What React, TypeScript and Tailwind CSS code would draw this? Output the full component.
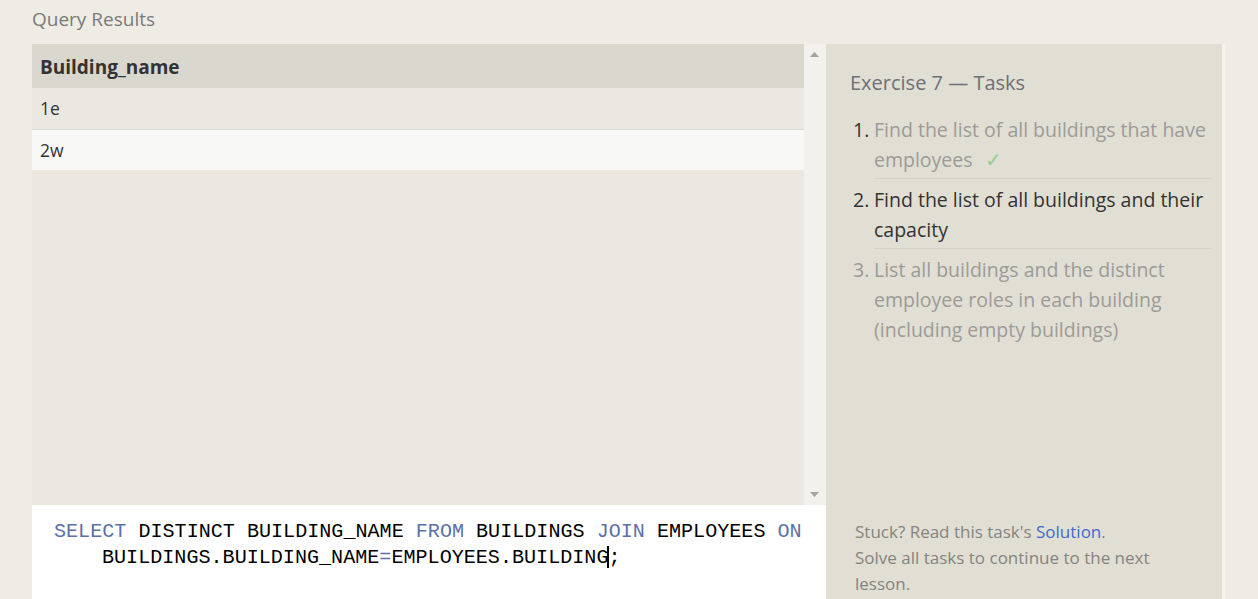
import React from 'react';

const sans = { fontFamily: '"Open Sans", "Noto Sans", sans-serif' };

function Kw({ children }: { children: React.ReactNode }) {
  return <span className="text-[#5b72a6]">{children}</span>;
}

export default function App() {
  return (
    <div className="w-[1258px] h-[599px] overflow-hidden bg-[#efece5] flex flex-col" style={sans}>
      <div className="h-[44px] pl-[32px] pt-[5px] text-[19px] text-[#7a7a7a] leading-[28px]">Query Results</div>

      <div className="flex flex-1 min-h-0">
        {/* left: results + editor */}
        <div className="w-[794px] ml-[32px] flex flex-col">
          <div className="h-[461px] flex">
            <div className="flex-1 bg-[#eae8e1] text-[#333]">
              <div className="h-[44px] bg-[#dad8ce] flex items-center pl-[8px] pt-[3px] text-[19px] font-bold">Building_name</div>
              <div className="h-[42px] flex items-center pl-[8px] text-[17.5px] border-b border-[#dcdcd8]">1e</div>
              <div className="h-[40px] flex items-center pl-[8px] text-[17.5px] bg-[#f8f8f7]">2w</div>
            </div>
            <div className="w-[22px] bg-[#f2f1ee] flex flex-col items-center justify-between py-[8px] pr-[2px]">
              <svg width="9" height="5" viewBox="0 0 9 5"><path d="M0 5 L4.5 0 L9 5 Z" fill="#a3a3a3" /></svg>
              <svg width="9" height="5" viewBox="0 0 9 5"><path d="M0 0 L4.5 5 L9 0 Z" fill="#a3a3a3" /></svg>
            </div>
          </div>
          <div
            className="flex-1 bg-white pt-[14px] pl-[22px] text-[20.1px] leading-[26px] text-black"
            style={{ fontFamily: '"Liberation Mono", monospace' }}
          >
            <div className="whitespace-pre">
              <Kw>SELECT</Kw> DISTINCT BUILDING_NAME <Kw>FROM</Kw> BUILDINGS <Kw>JOIN</Kw> EMPLOYEES <Kw>ON</Kw>
            </div>
            <div className="whitespace-pre pl-[48px]">
              BUILDINGS.BUILDING_NAME<Kw>=</Kw>EMPLOYEES.BUILDING
              <span className="inline-block w-[2px] h-[22px] bg-black align-middle -mx-[1px] relative -top-[1px]" />
              ;
            </div>
          </div>
        </div>

        {/* right: tasks */}
        <div className="w-[399px] bg-[#e1ded4] border-r-[3px] border-[#f4f2ec] flex flex-col px-[24px] pr-[10px]">
          <div className="pt-[25px] text-[20px] leading-[28px] text-[#6d7078]">Exercise 7 — Tasks</div>
          <ol className="mt-[18px] text-[19.5px] leading-[30px]">
            <li className="flex mb-[6px]">
              <span className="w-[24px] shrink-0 pl-[3px] text-[#333]">1.</span>
              <span className="flex-1 text-[#9c9b98] pb-[3px] border-b border-[#d5d2c8]">
                Find the list of all buildings that have employees
                <span className="ml-[12px] text-[#93cf93]">✓</span>
              </span>
            </li>
            <li className="flex mb-[6px]">
              <span className="w-[24px] shrink-0 pl-[3px] text-[#333]">2.</span>
              <span className="flex-1 text-[#333] pb-[3px] border-b border-[#d5d2c8]">
                Find the list of all buildings and their capacity
              </span>
            </li>
            <li className="flex text-[#9c9b98]">
              <span className="w-[24px] shrink-0 pl-[3px]">3.</span>
              <span className="flex-1 pr-[40px]">
                List all buildings and the distinct employee roles in each building (including empty buildings)
              </span>
            </li>
          </ol>
          <div className="mt-auto pl-[5px] pb-[2px] pr-[40px] text-[17px] leading-[26px] text-[#858480]">
            Stuck? Read this task's <span className="text-[#3d6bd1]">Solution</span>.
            <br />
            Solve all tasks to continue to the next lesson.
          </div>
        </div>
      </div>
    </div>
  );
}
